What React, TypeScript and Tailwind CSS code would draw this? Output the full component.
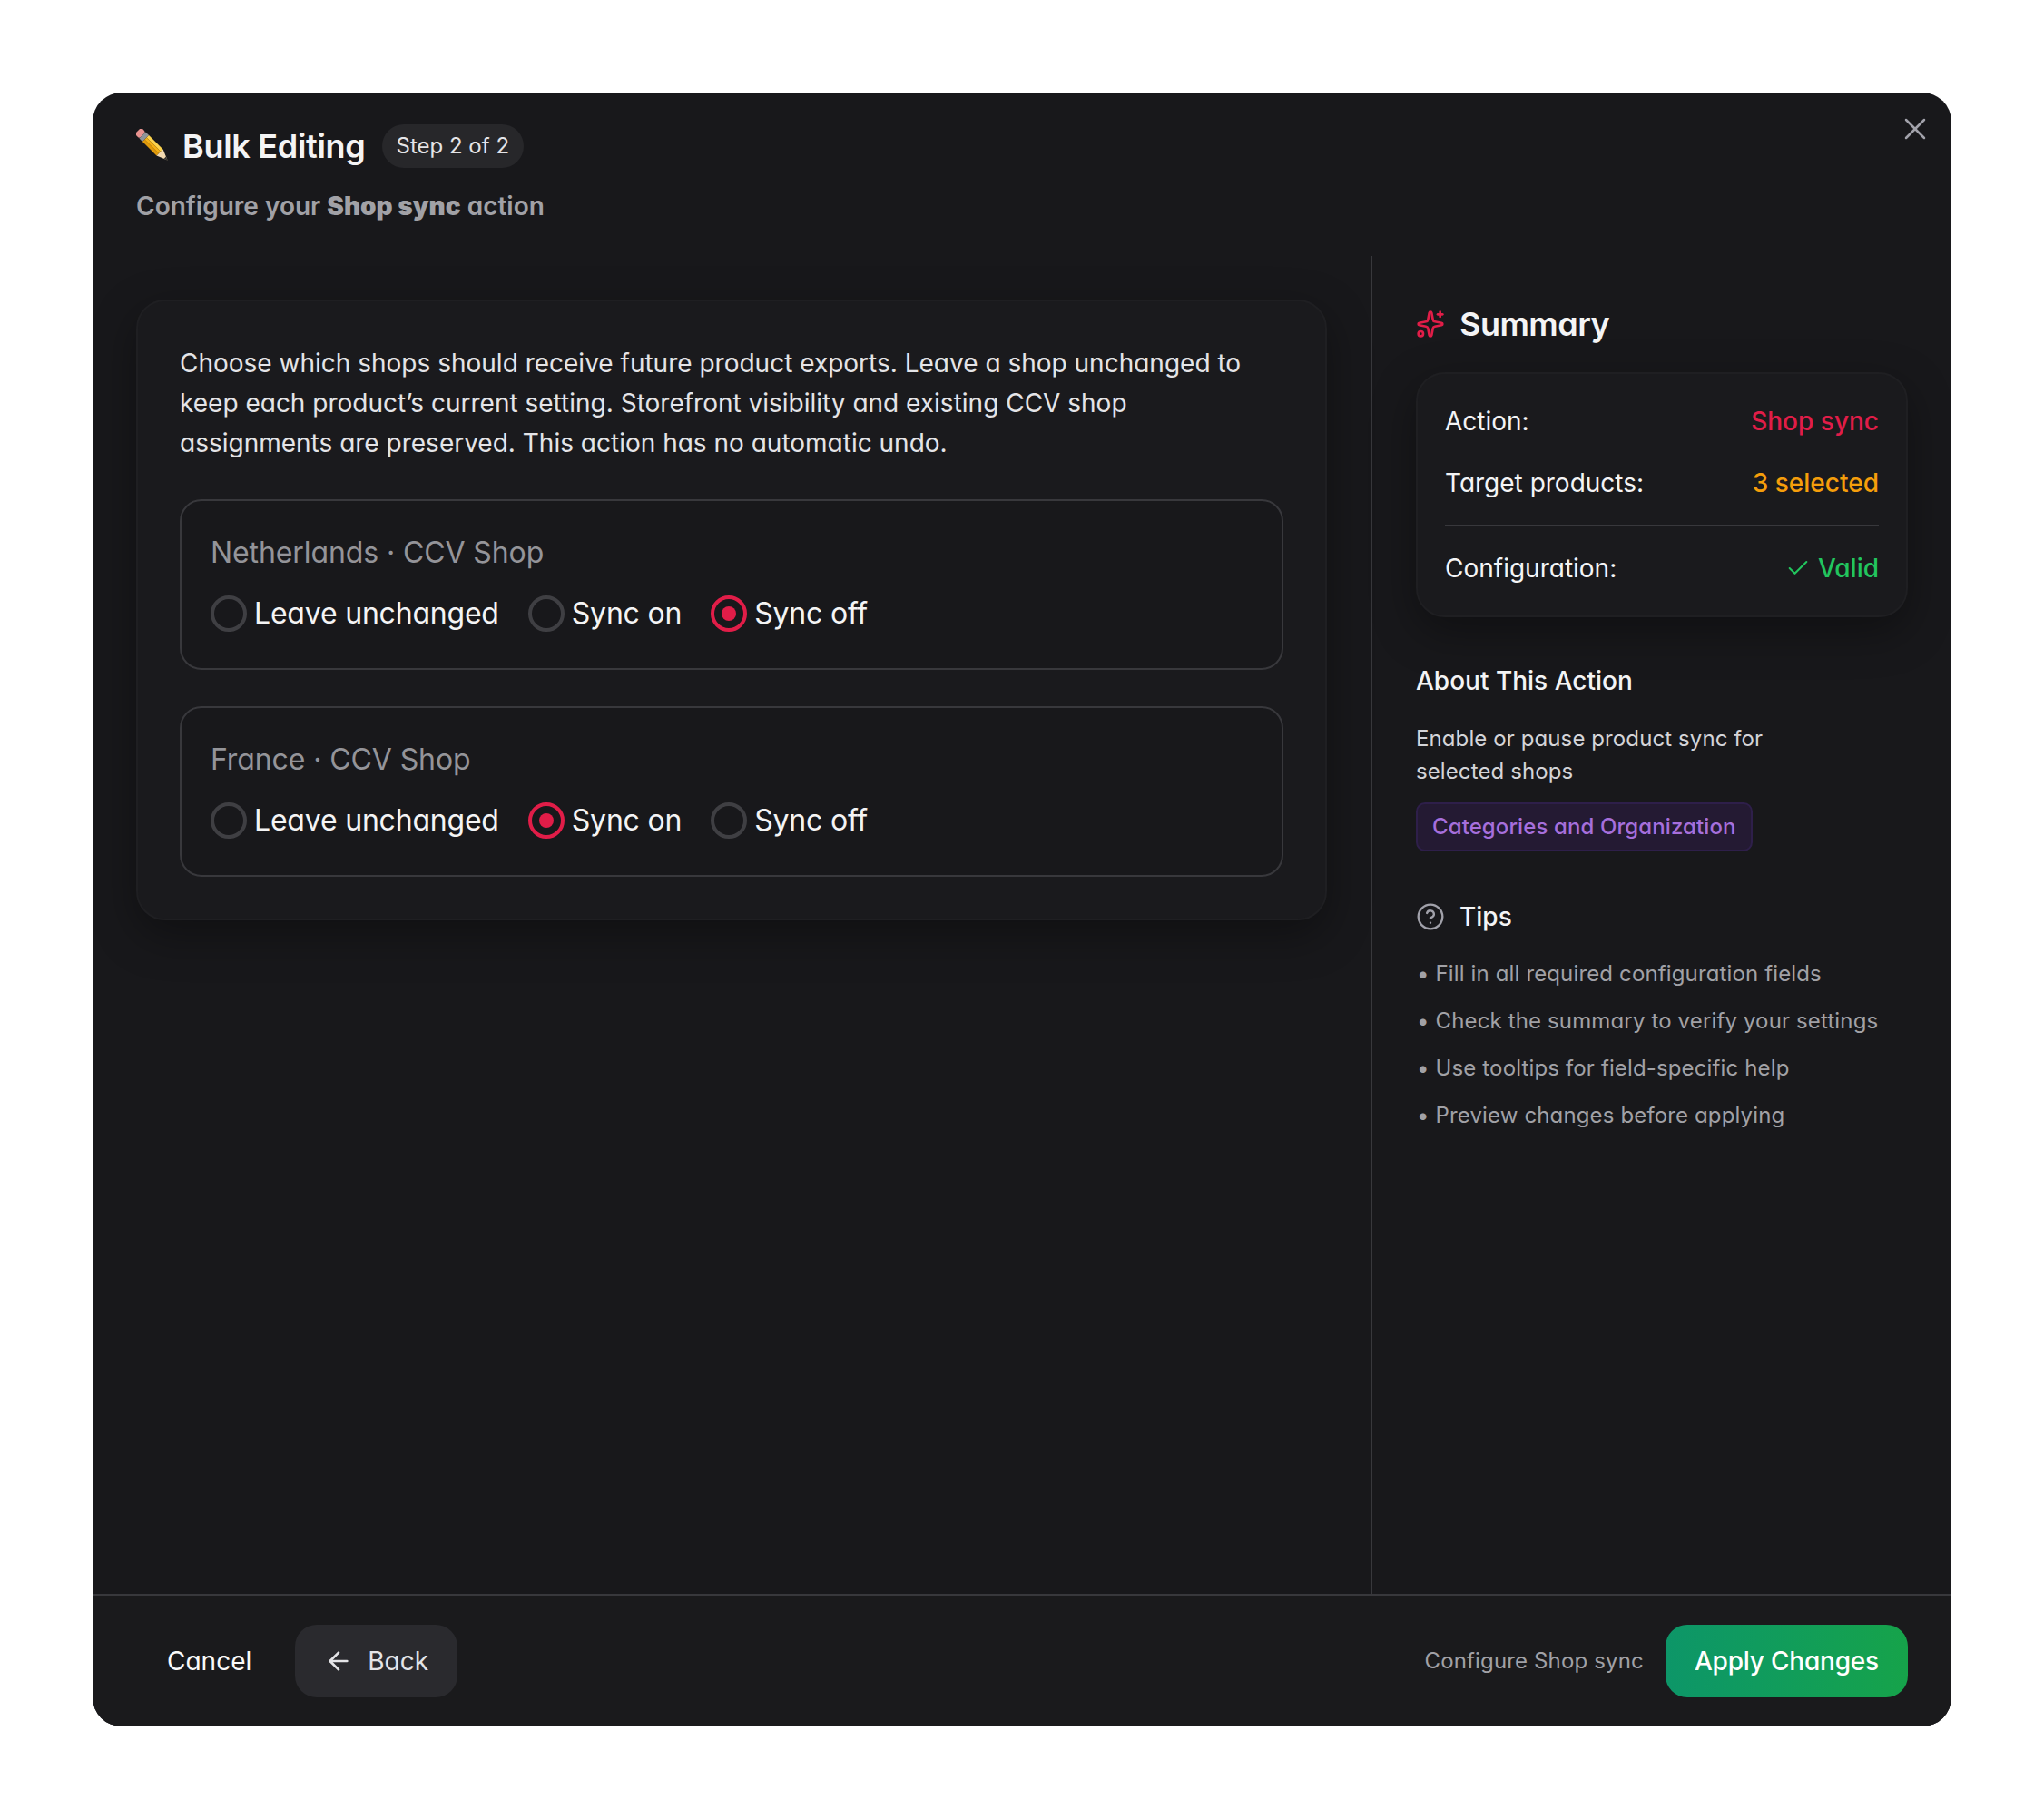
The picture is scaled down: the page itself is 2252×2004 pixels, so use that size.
import React from "react";
import { ArrowLeft, Check, CircleHelp, Sparkles, X } from "lucide-react";

function PencilEmoji() {
  return (
    <svg width="38" height="38" viewBox="0 0 38 38" className="shrink-0">
      <g transform="rotate(45 19 19)">
        <rect x="-5" y="14" width="7" height="10" rx="2.5" fill="#e8928f" />
        <rect x="2" y="14" width="5" height="10" fill="#8f9499" />
        <rect x="7" y="14" width="22" height="3.4" fill="#fcd34d" />
        <rect x="7" y="17.4" width="22" height="3.2" fill="#f5b014" />
        <rect x="7" y="20.6" width="22" height="3.4" fill="#e09a0c" />
        <polygon points="29,14 29,24 41,19" fill="#f3d9b1" />
        <polygon points="37,17.3 37,20.7 41,19" fill="#33312e" />
      </g>
    </svg>
  );
}

function Radio({ label, selected }: { label: string; selected?: boolean }) {
  return (
    <label className="flex items-center gap-2 text-[32px] leading-[48px] tracking-[-0.2px] text-[#f4f4f5]">
      <span
        className={
          selected
            ? "flex size-10 items-center justify-center rounded-full border-4 border-[#e11d48]"
            : "flex size-10 items-center justify-center rounded-full border-4 border-[#3f3f43]"
        }
      >
        {selected && <span className="size-4 rounded-full bg-[#e11d48]" />}
      </span>
      {label}
    </label>
  );
}

function ShopBox({ name, value }: { name: string; value: string }) {
  return (
    <div className="rounded-[24px] border-2 border-[#38383c] bg-[#18181b] px-[32px] pt-[33px] pb-[36px]">
      <div className="text-[32px] leading-[48px] tracking-[-0.1px] text-[#949499]">{name}</div>
      <div className="mt-[19px] flex gap-8">
        <Radio label="Leave unchanged" selected={value === "leave"} />
        <Radio label="Sync on" selected={value === "on"} />
        <Radio label="Sync off" selected={value === "off"} />
      </div>
    </div>
  );
}

function Row({ label, children }: { label: string; children: React.ReactNode }) {
  return (
    <div className="flex h-[44px] items-center justify-between text-[28px] text-[#f4f4f5]">
      <span>{label}</span>
      {children}
    </div>
  );
}

const tips = [
  "Fill in all required configuration fields",
  "Check the summary to verify your settings",
  "Use tooltips for field-specific help",
  "Preview changes before applying",
];

export default function App() {
  return (
    <div className="flex h-[2004px] w-full items-center justify-center bg-white [font-family:Inter,sans-serif] [font-feature-settings:'cv11']">
      <div className="relative flex h-[1800px] w-[2048px] flex-col overflow-hidden rounded-[32px] bg-[#18181b]">
        <button className="absolute top-5 right-5 text-[#a1a1aa]">
          <X size={40} strokeWidth={1.5} />
        </button>

        <header className="h-[180px] shrink-0 px-12 pt-[35px]">
          <div className="flex h-12 items-center">
            <PencilEmoji />
            <h2 className="ml-[13px] text-[36px] font-semibold tracking-[-0.3px] text-[#f4f4f5]">Bulk Editing</h2>
            <span className="ml-[18px] flex h-12 items-center rounded-full bg-[#27272a] px-4 text-[24px] text-[#e4e4e7]">
              Step 2 of 2
            </span>
          </div>
          <p className="mt-5 text-[28px] leading-[44px] font-semibold text-[#a1a1a6]">
            Configure your <span className="font-black">Shop sync</span> action
          </p>
        </header>

        <main className="flex min-h-0 flex-1">
          <section className="w-[1410px] shrink-0 border-r-2 border-[#38383c] p-12">
            <div className="rounded-[32px] border-2 border-[#1f1f22] bg-[#1a1a1d] p-[46px] shadow-[0_16px_48px_rgba(0,0,0,0.35)]">
              <p className="text-[28px] leading-[44px] text-[#e4e4e7]">
                Choose which shops should receive future product exports. Leave a shop unchanged to keep each
                product’s current setting. Storefront visibility and existing CCV shop assignments are preserved.
                This action has no automatic undo.
              </p>
              <div className="mt-10 flex flex-col gap-10">
                <ShopBox name="Netherlands · CCV Shop" value="off" />
                <ShopBox name="France · CCV Shop" value="on" />
              </div>
            </div>
          </section>

          <aside className="min-w-0 flex-1 p-12">
            <div className="flex h-[54px] items-center gap-4">
              <Sparkles size={32} strokeWidth={2} className="text-[#e11d48]" />
              <h3 className="text-[36px] font-semibold tracking-[-0.5px] text-[#f4f4f5]">Summary</h3>
            </div>
            <div className="mt-[26px] rounded-[32px] border-2 border-[#1f1f22] bg-[#1a1a1d] p-[30px] shadow-[0_16px_48px_rgba(0,0,0,0.35)]">
              <Row label="Action:">
                <span className="font-medium text-[#e11d48]">Shop sync</span>
              </Row>
              <div className="mt-6">
                <Row label="Target products:">
                  <span className="font-medium text-[#f59e0b]">3 selected</span>
                </Row>
              </div>
              <div className="mt-6 border-t-2 border-[#38383c] pt-6">
                <Row label="Configuration:">
                  <span className="flex items-center gap-2 font-medium text-[#22c55e]">
                    <Check size={28} strokeWidth={1.75} />
                    Valid
                  </span>
                </Row>
              </div>
            </div>

            <h4 className="mt-12 text-[28px] leading-[44px] font-medium text-[#f4f4f5]">About This Action</h4>
            <p className="mt-6 w-[420px] text-[24px] leading-[36px] tracking-[0.1px] text-[#d4d4d8]">
              Enable or pause product sync for selected shops
            </p>
            <div className="mt-4 inline-flex h-[54px] items-center rounded-[10px] border-2 border-[#2e1f4a] bg-[#241a33] px-4 text-[24px] font-medium tracking-[0.1px] text-[#a66fdc]">
              Categories and Organization
            </div>

            <div className="mt-12 flex h-12 items-center gap-4">
              <CircleHelp size={32} strokeWidth={1.75} className="text-[#a1a1aa]" />
              <h4 className="text-[28px] font-medium text-[#f4f4f5]">Tips</h4>
            </div>
            <ul className="mt-[21px] flex flex-col gap-4 pl-px text-[24px] leading-[36px] tracking-[0.14px] text-[#a1a1a6]">
              {tips.map((tip) => (
                <li key={tip}>• {tip}</li>
              ))}
            </ul>
          </aside>
        </main>

        <footer className="flex shrink-0 items-center justify-between border-t-2 border-[#38383c] bg-[#1a1a1c] px-12 py-8">
          <div className="flex items-center gap-[14px]">
            <button className="flex h-20 items-center rounded-[24px] px-[34px] text-[28px] text-[#fafafa]">Cancel</button>
            <button className="flex h-20 items-center gap-4 rounded-[24px] bg-[#2a2a2e] px-8 text-[28px] text-[#e4e4e7]">
              <ArrowLeft size={32} strokeWidth={2} />
              Back
            </button>
          </div>
          <div className="flex items-center gap-6">
            <span className="text-[24px] tracking-[0.15px] text-[#a1a1a6]">Configure Shop sync</span>
            <button className="flex h-20 items-center rounded-[24px] bg-gradient-to-r from-[#0d9668] to-[#16a34a] px-8 text-[28px] font-medium tracking-[-0.2px] text-white">
              Apply Changes
            </button>
          </div>
        </footer>
      </div>
    </div>
  );
}
